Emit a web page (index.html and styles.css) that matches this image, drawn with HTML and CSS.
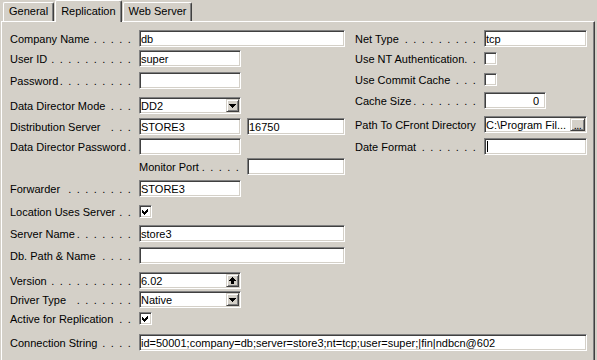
FILE: index.html
```html
<!DOCTYPE html>
<html lang="en">
<head>
  <meta charset="UTF-8">
  <meta name="viewport" content="width=device-width, initial-scale=1.0">
  <title>Replication</title>
  <link rel="stylesheet" href="styles.css">
</head>
<body>
  <div class="window">

    <div class="tabs">
      <div class="tab">General</div>
      <div class="tab active">Replication</div>
      <div class="tab">Web Server</div>
    </div>

    <div class="panel">
      <div class="cols">

        <div class="col left">
          <div class="row">
            <label class="lbl">Company Name<span class="dots">. . . . .</span></label>
            <input class="edit long" value="db">
          </div>
          <div class="row mt3">
            <label class="lbl">User ID<span class="dots">. . . . . . . . . .</span></label>
            <input class="edit short" value="super">
          </div>
          <div class="row mt5">
            <label class="lbl">Password<span class="dots">. . . . . . . . .</span></label>
            <input class="edit short" type="password">
          </div>
          <div class="row mt8">
            <label class="lbl">Data Director Mode<span class="dots">. . .</span></label>
            <div class="edit combo short">
              <span>DD2</span>
              <span class="btn"><svg width="7" height="4" viewBox="0 0 7 4"><path d="M0 0H7L3.5 4Z"/></svg></span>
            </div>
          </div>
          <div class="row mt4">
            <label class="lbl">Distribution Server<span class="dots">. . .</span></label>
            <input class="edit short" value="STORE3">
            <input class="edit port pair" value="16750">
          </div>
          <div class="row mt3">
            <label class="lbl">Data Director Password<span class="dots">.</span></label>
            <input class="edit short">
          </div>
          <div class="row mt3 indent">
            <label class="lbl sub">Monitor Port<span class="dots">. . . . .</span></label>
            <input class="edit port">
          </div>
          <div class="row mt5">
            <label class="lbl">Forwarder<span class="dots">. . . . . . . .</span></label>
            <input class="edit short" value="STORE3">
          </div>
          <div class="row mt6">
            <label class="lbl">Location Uses Server<span class="dots">. .</span></label>
            <span class="check"><svg width="7" height="7" viewBox="0 0 7 7"><path d="M0 2L2 4L6 0V3L2 7L0 5Z"/></svg></span>
          </div>
          <div class="row mt5">
            <label class="lbl">Server Name<span class="dots">. . . . . . .</span></label>
            <input class="edit long" value="store3">
          </div>
          <div class="row mt5">
            <label class="lbl">Db. Path &amp; Name<span class="dots">. . . .</span></label>
            <input class="edit long">
          </div>
          <div class="row mt8">
            <label class="lbl">Version<span class="dots">. . . . . . . . . .</span></label>
            <div class="edit combo short">
              <span>6.02</span>
              <span class="btn"><svg width="7" height="7" viewBox="0 0 7 7"><path d="M3.5 0L7 4H5V7H2V4H0Z"/></svg></span>
            </div>
          </div>
          <div class="row mt2">
            <label class="lbl">Driver Type<span class="dots">. . . . . . .</span></label>
            <div class="edit combo short">
              <span>Native</span>
              <span class="btn"><svg width="7" height="4" viewBox="0 0 7 4"><path d="M0 0H7L3.5 4Z"/></svg></span>
            </div>
          </div>
          <div class="row mt2">
            <label class="lbl">Active for Replication<span class="dots">. .</span></label>
            <span class="check"><svg width="7" height="7" viewBox="0 0 7 7"><path d="M0 2L2 4L6 0V3L2 7L0 5Z"/></svg></span>
          </div>
        </div>

        <div class="col right">
          <div class="row">
            <label class="lbl">Net Type<span class="dots">. . . . . . . . .</span></label>
            <input class="edit side" value="tcp">
          </div>
          <div class="row mt3">
            <label class="lbl">Use NT Authentication.<span class="dots">.</span></label>
            <span class="check"></span>
          </div>
          <div class="row mt4">
            <label class="lbl">Use Commit Cache<span class="dots">. . .</span></label>
            <span class="check"></span>
          </div>
          <div class="row mt4">
            <label class="lbl">Cache Size<span class="dots">. . . . . . . .</span></label>
            <input class="edit tiny num" value="0">
          </div>
          <div class="row mt7">
            <label class="lbl">Path To CFront Directory</label>
            <div class="edit combo side">
              <span>C:\Program Fil...</span>
              <span class="btn more">...</span>
            </div>
          </div>
          <div class="row mt5">
            <label class="lbl">Date Format<span class="dots">. . . . . . .</span></label>
            <div class="edit side"><span class="caret"></span></div>
          </div>
        </div>

      </div>

      <div class="row mt7">
        <label class="lbl">Connection String<span class="dots">. . . .</span></label>
        <input class="edit full" value="id=50001;company=db;server=store3;nt=tcp;user=super;|fin|ndbcn@602">
      </div>
    </div>

  </div>
</body>
</html>
```

FILE: styles.css
```css
body{
  margin: 0;
  background: #d4d0c8;
  color: #000;
  font: 11px "Liberation Sans", Arial, sans-serif;
  overflow: hidden;
}

.window{
  padding: 0 2px 0 1px;
}

/* tab strip */
.tabs{
  display: flex;
  align-items: flex-end;
  height: 21px;
  padding-left: 2px;
}
.tab{
  box-sizing: border-box;
  height: 19px;
  padding: 2px 5px 0;
  line-height: 13px;
  border: 1px solid;
  border-color: #fff #404040 transparent #fff;
  border-bottom: none;
  border-radius: 2px 2px 0 0;
  box-shadow: inset -1px 0 #808080;
}
.tab.active{
  position: relative;
  z-index: 1;
  height: 22px;
  padding-top: 4px;
  margin: 0 1px -1px 1px;
  background: #d4d0c8;
}

/* page */
.panel{
  box-sizing: border-box;
  height: 339px;
  padding: 8px 0 0 8px;
  border-top: 1px solid #fff;
  border-left: 1px solid #fff;
  border-right: 1px solid #404040;
  box-shadow: inset -1px 0 #808080;
}
.cols{
  display: flex;
  gap: 10px;
}
.col.left{
  width: 335px;
}
.col.right{
  width: 232px;
}

.row{
  display: flex;
  align-items: center;
  height: 17px;
}
.row.indent{
  padding-left: 129px;
}
.mt2{ margin-top: 2px; }
.mt3{ margin-top: 3px; }
.mt4{ margin-top: 4px; }
.mt5{ margin-top: 5px; }
.mt6{ margin-top: 6px; }
.mt7{ margin-top: 7px; }
.mt8{ margin-top: 8px; }

.lbl{
  box-sizing: border-box;
  flex: none;
  display: flex;
  width: 129px;
  padding-right: 7px;
  white-space: nowrap;
}
.lbl.sub{
  width: 108px;
}
.dots{
  margin-left: auto;
  letter-spacing: 1.2px;
}

/* sunken edit box */
.edit{
  box-sizing: border-box;
  flex: none;
  height: 17px;
  margin: 0;
  padding: 0 1px;
  border: 1px solid;
  border-color: #808080 #fff #fff #808080;
  box-shadow: inset 1px 1px #404040, inset -1px -1px #d4d0c8;
  background: #fff;
  color: #000;
  font: inherit;
  outline: none;
}
.short{ width: 102px; }
.long{ width: 206px; }
.port{ width: 98px; }
.pair{ margin-left: 6px; }
.side{ width: 103px; }
.tiny{ width: 62px; }
.full{ width: 448px; }
.num{
  text-align: right;
  padding-right: 6px;
}

.combo{
  display: flex;
  align-items: center;
  padding: 1px;
  white-space: nowrap;
}
.btn{
  box-sizing: border-box;
  display: flex;
  align-items: center;
  justify-content: center;
  width: 13px;
  height: 13px;
  margin-left: auto;
  border: 1px solid;
  border-color: #d4d0c8 #404040 #404040 #d4d0c8;
  box-shadow: inset 1px 1px #fff, inset -1px -1px #808080;
  background: #d4d0c8;
}
.btn.more{
  width: 15px;
  align-items: flex-end;
  line-height: 9px;
  letter-spacing: -0.5px;
}

.check{
  box-sizing: border-box;
  display: flex;
  align-items: center;
  justify-content: center;
  width: 13px;
  height: 13px;
  border: 1px solid;
  border-color: #808080 #fff #fff #808080;
  box-shadow: inset 1px 1px #404040, inset -1px -1px #d4d0c8;
  background: #fff;
}
svg{
  display: block;
  shape-rendering: crispEdges;
}

.caret{
  display: block;
  width: 1px;
  height: 11px;
  margin: 2px 0 0 1px;
  background: #000;
}
```
